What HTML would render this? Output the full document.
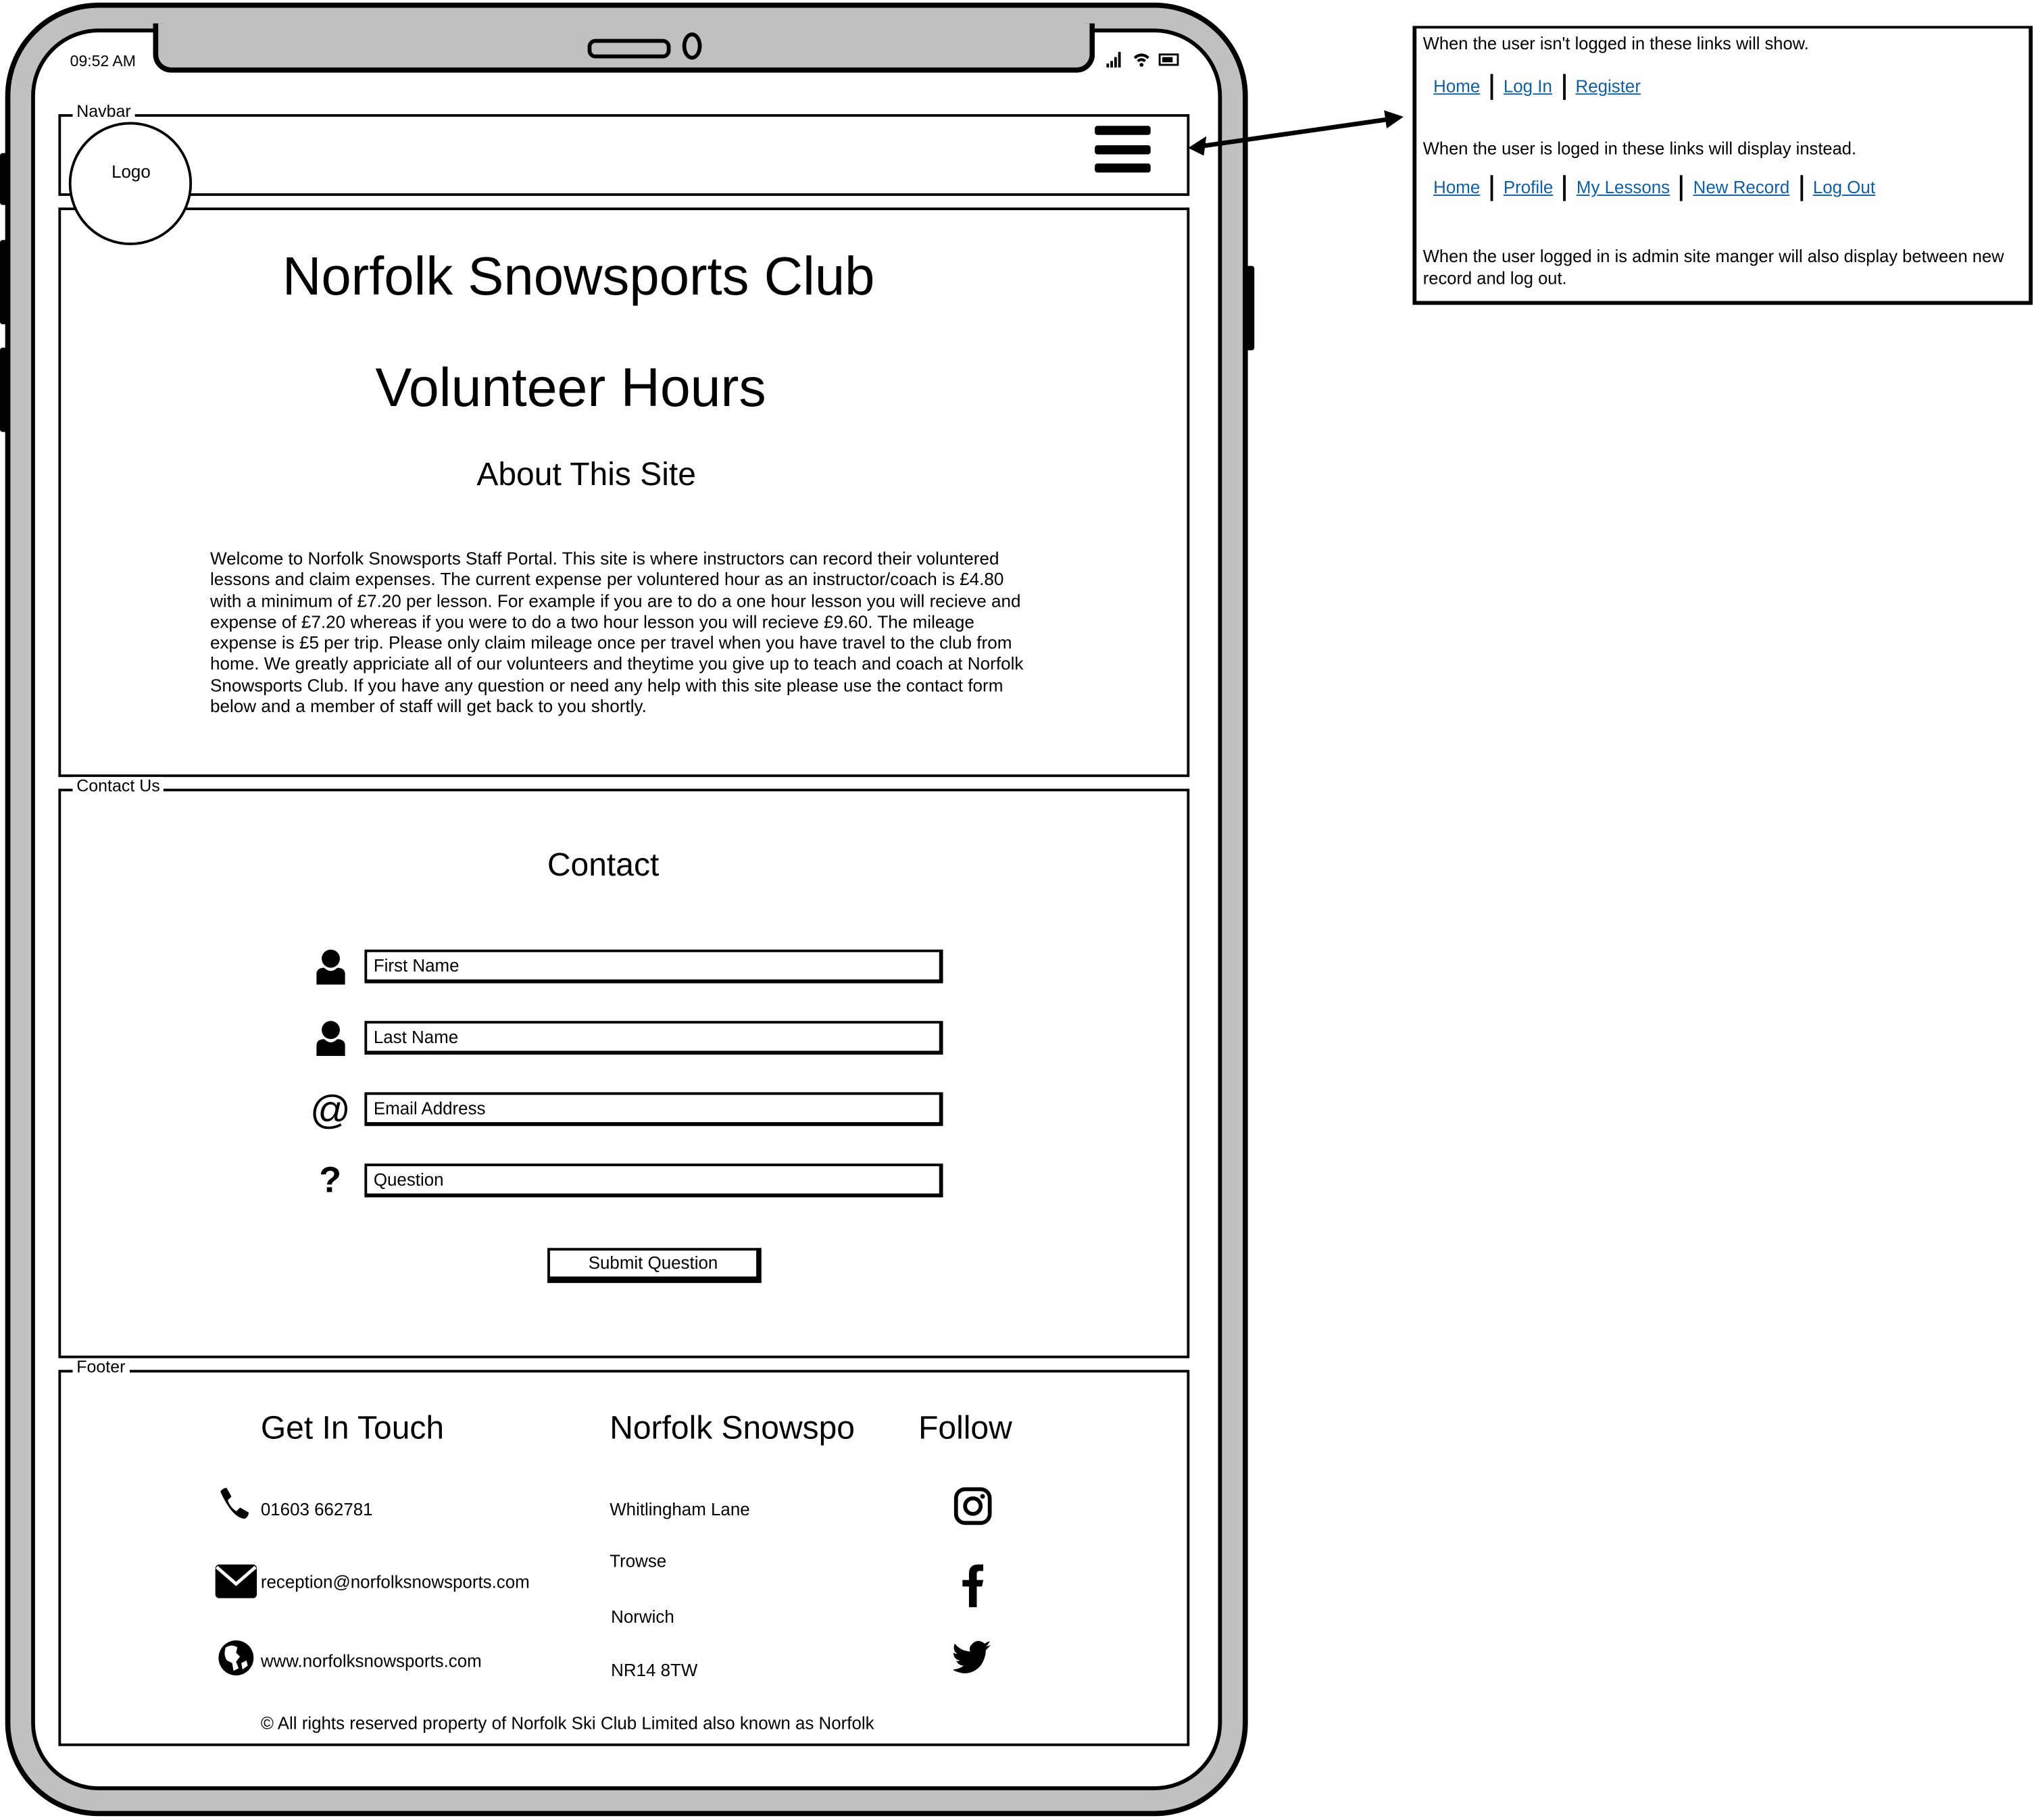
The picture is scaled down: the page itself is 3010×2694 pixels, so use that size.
<!DOCTYPE html>
<html><head><meta charset="utf-8">
<style>
html,body{margin:0;padding:0;background:#fff;width:3010px;height:2694px;overflow:hidden}
#s{position:absolute;left:0;top:0;width:1568px;height:1403px;transform:scale(1.9196,1.9202);transform-origin:0 0;font-family:"Liberation Sans",sans-serif;color:#000}
.a{position:absolute;white-space:nowrap;line-height:1}
.box{position:absolute;border:2.5px solid #000;box-sizing:border-box;background:#fff}
.lbl{position:absolute;background:#fff;font-size:13px;padding:0 3px;line-height:1}
.inp{position:absolute;left:281px;width:446px;height:26px;border:2.5px solid #000;border-right-width:3px;border-bottom-width:3px;box-sizing:border-box;font-size:13.5px;padding:4px 5px;line-height:1}
a{color:#0e5fa5;text-decoration:underline}
.sep{display:inline-block;width:2px;height:20px;background:#000;vertical-align:middle;margin:0 8px}
</style></head><body><div id="s">
<div style="position:absolute;left:4px;top:2px;width:958px;height:1398px;border:4px solid #000;border-radius:72px;background:#c0c0c0;box-sizing:border-box"></div>
<div style="position:absolute;left:24px;top:22px;width:918px;height:1358px;border:3.5px solid #000;border-radius:52px;background:#fff;box-sizing:border-box"></div>
<div style="position:absolute;left:118px;top:18px;width:726px;height:38px;background:#c0c0c0;border:4px solid #000;border-top:none;border-radius:0 0 14px 14px;box-sizing:border-box"></div>
<div style="position:absolute;left:453px;top:30px;width:58px;height:9px;border:3px solid #000;border-radius:6px;background:#c0c0c0"></div>
<div style="position:absolute;left:526px;top:25px;width:9px;height:15px;border:3px solid #000;border-radius:50%"></div>
<div style="position:absolute;left:0;top:118px;width:6px;height:40px;background:#000;border-radius:2px"></div>
<div style="position:absolute;left:0;top:185px;width:6px;height:65px;background:#000;border-radius:2px"></div>
<div style="position:absolute;left:0;top:268px;width:6px;height:65px;background:#000;border-radius:2px"></div>
<div style="position:absolute;left:960px;top:205px;width:7px;height:65px;background:#000;border-radius:2px"></div>
<div class="a" style="left:54px;top:41px;font-size:12px">09:52 AM</div>
<svg style="position:absolute;left:852px;top:38px" width="62" height="16"><g fill="#000"><rect x="1" y="11" width="2" height="3"/><rect x="4" y="9" width="2" height="5"/><rect x="7" y="6" width="2" height="8"/><rect x="10" y="2" width="2" height="12"/><path d="M22 6a8 8 0 0 1 12 0l-1.5 1.5a6 6 0 0 0-9 0z M24.5 8.5a4.5 4.5 0 0 1 7 0L30 10a2.5 2.5 0 0 0-4 0z"/><circle cx="28" cy="12" r="1.5"/><rect x="42" y="4" width="14" height="8" fill="none" stroke="#000" stroke-width="1.5"/><rect x="44" y="6" width="8" height="4"/></g></svg>
<div class="box" style="left:45px;top:88px;width:872px;height:63px"></div>
<div class="lbl" style="left:56px;top:79px">Navbar</div>
<div style="position:absolute;left:844px;top:97px;width:43px;height:7px;background:#000;border-radius:2px"></div>
<div style="position:absolute;left:844px;top:112px;width:43px;height:7px;background:#000;border-radius:2px"></div>
<div style="position:absolute;left:844px;top:126px;width:43px;height:7px;background:#000;border-radius:2px"></div>
<div class="box" style="left:45px;top:160px;width:872px;height:439px"></div>
<div style="position:absolute;left:53px;top:94px;width:95px;height:95px;border:2.5px solid #000;border-radius:50%;background:#fff;box-sizing:border-box"></div>
<div class="a" style="left:86px;top:126px;font-size:13.5px">Logo</div>
<div class="a" style="left:0;width:892px;text-align:center;top:192px;font-size:41.5px">Norfolk Snowsports Club</div>
<div class="a" style="left:0;width:880px;text-align:center;top:278px;font-size:42px">Volunteer Hours</div>
<div class="a" style="left:0;width:904px;text-align:center;top:354px;font-size:25px">About This Site</div>
<div class="a" style="left:162px;top:423px;font-size:13.6px;line-height:16.3px">Welcome to Norfolk Snowsports Staff Portal. This site is where instructors can record their voluntered<br>lessons and claim expenses. The current expense per voluntered hour as an instructor/coach is £4.80<br>with a minimum of £7.20 per lesson. For example if you are to do a one hour lesson you will recieve and<br>expense of £7.20 whereas if you were to do a two hour lesson you will recieve £9.60. The mileage<br>expense is £5 per trip. Please only claim mileage once per travel when you have travel to the club from<br>home. We greatly appriciate all of our volunteers and theytime you give up to teach and coach at Norfolk<br>Snowsports Club. If you have any question or need any help with this site please use the contact form<br>below and a member of staff will get back to you shortly.</div>
<div class="box" style="left:45px;top:608px;width:872px;height:439px"></div>
<div class="lbl" style="left:56px;top:599px">Contact Us</div>
<div class="a" style="left:0;width:930px;text-align:center;top:655px;font-size:25px">Contact</div>
<svg style="position:absolute;left:243px;top:731px" width="24" height="30"><circle cx="12" cy="8" r="7"/><path d="M1 28v-8q0-5 6-5q5 5 10 0q6 0 6 5v8z"/></svg>
<svg style="position:absolute;left:243px;top:786px" width="24" height="30"><circle cx="12" cy="8" r="7"/><path d="M1 28v-8q0-5 6-5q5 5 10 0q6 0 6 5v8z"/></svg>
<div class="a" style="left:239px;top:840px;font-size:31px">@</div>
<div class="a" style="left:246px;top:896px;font-size:28px;font-weight:bold">?</div>
<div class="inp" style="top:732px">First Name</div>
<div class="inp" style="top:787px">Last Name</div>
<div class="inp" style="top:842px">Email Address</div>
<div class="inp" style="top:897px">Question</div>
<div style="position:absolute;left:422px;top:962px;width:165px;height:27px;border:2.5px solid #000;border-right-width:4px;border-bottom-width:5px;box-sizing:border-box;font-size:13.5px;text-align:center;line-height:20px">Submit Question</div>
<div class="box" style="left:45px;top:1056px;width:872px;height:290px"></div>
<div class="lbl" style="left:56px;top:1047px">Footer</div>
<div class="a" style="left:201px;top:1089px;font-size:25px">Get In Touch</div>
<div class="a" style="left:470px;top:1089px;font-size:25px">Norfolk Snowspo</div>
<div class="a" style="left:708px;top:1089px;font-size:25px">Follow</div>
<svg style="position:absolute;left:168px;top:1146px" width="28" height="28"><path d="M2 4q2-3 5-3l4 7-3 3q2 6 7 9l3-3 7 4q0 3-3 5q-10 0-20-22z" transform="scale(0.95)"/></svg>
<div class="a" style="left:201px;top:1157px;font-size:13.5px">01603 662781</div>
<svg style="position:absolute;left:165px;top:1205px" width="34" height="28"><rect x="1" y="1" width="32" height="26" rx="3"/><path d="M2 3l15 13 15-13" fill="none" stroke="#fff" stroke-width="2.5"/></svg>
<div class="a" style="left:201px;top:1213px;font-size:13.5px">reception@norfolksnowsports.com</div>
<svg style="position:absolute;left:168px;top:1264px" width="30" height="30"><circle cx="14" cy="14" r="13.5"/><path d="M6 6q5-3 9 0l-1 4 3 3-3 4 2 5-4 2-1-6-4-2q-3-4-1-10zM18 18l4-2 1 4-4 3z" fill="#fff"/></svg>
<div class="a" style="left:201px;top:1274px;font-size:13.5px">www.norfolksnowsports.com</div>
<div class="a" style="left:470px;top:1157px;font-size:13.5px">Whitlingham Lane</div>
<div class="a" style="left:470px;top:1197px;font-size:13.5px">Trowse</div>
<div class="a" style="left:471px;top:1240px;font-size:13.5px">Norwich</div>
<div class="a" style="left:471px;top:1281px;font-size:13.5px">NR14 8TW</div>
<svg style="position:absolute;left:735px;top:1146px" width="30" height="30"><rect x="2" y="2" width="26" height="26" rx="7" fill="none" stroke="#000" stroke-width="3"/><circle cx="15" cy="15" r="6" fill="none" stroke="#000" stroke-width="3"/><circle cx="22.5" cy="7.5" r="1.8"/></svg>
<svg style="position:absolute;left:740px;top:1205px" width="20" height="34"><path d="M7 34V18H2v-5h5V8q0-7 7-7h4v5h-3q-2 0-2 2v5h5l-1 5h-4v16z"/></svg>
<svg style="position:absolute;left:735px;top:1265px" width="30" height="26"><path d="M29 3q-2 1-4 1 2-1 3-4-2 1-4 2-6-5-11 2-1 2 0 4Q6 8 1 2q-2 5 2 8-1 0-3-1 0 5 5 6-2 1-3 0 2 4 6 4-4 3-9 3 13 7 22-3 4-6 4-12 2-2 4-4z"/></svg>
<div class="a" style="left:201px;top:1322px;font-size:13.5px">© All rights reserved property of Norfolk Ski Club Limited also known as Norfolk</div>
<svg style="position:absolute;left:910px;top:80px" width="180" height="50"><line x1="14" y1="33" x2="160" y2="12" stroke="#000" stroke-width="3.5"/><path d="M6 34l14-9-2 15z M172 10l-15-5 2 14z"/></svg>
<div class="box" style="left:1089px;top:20px;width:478px;height:215px;border-width:2.5px 3px 3.5px 3px"></div>
<div class="a" style="left:1097px;top:27px;font-size:13.3px">When the user isn't logged in these links will show.</div>
<div class="a" style="left:1105px;top:57px;font-size:13.5px;line-height:20px"><a>Home</a><span class="sep"></span><a>Log In</a><span class="sep"></span><a>Register</a></div>
<div class="a" style="left:1097px;top:108px;font-size:13.3px">When the user is loged in these links will display instead.</div>
<div class="a" style="left:1105px;top:135px;font-size:13.5px;line-height:20px"><a>Home</a><span class="sep"></span><a>Profile</a><span class="sep"></span><a>My Lessons</a><span class="sep"></span><a>New Record</a><span class="sep"></span><a>Log Out</a></div>
<div class="a" style="left:1097px;top:189px;font-size:13.3px;line-height:17px">When the user logged in is admin site manger will also display between new<br>record and log out.</div>
</div></body></html>
